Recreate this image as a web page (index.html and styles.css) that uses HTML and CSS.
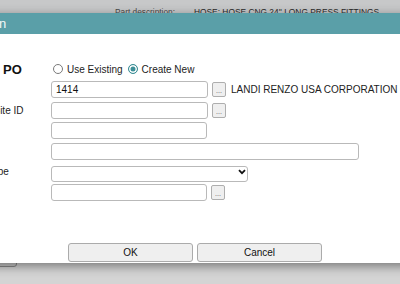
FILE: index.html
```html
<!DOCTYPE html>
<html>
<head>
<meta charset="utf-8">
<link rel="stylesheet" href="styles.css">
</head>
<body>
<div class="page">
  <div class="page-header">
    <span class="pd-label">Part description:</span>
    <span class="pd-value">HOSE: HOSE CNG 24'' LONG PRESS FITTINGS</span>
  </div>
  <div class="page-body"><span class="bg-button"></span></div>
</div>

<div class="dialog">
  <div class="dialog-title">Creation</div>
  <div class="dialog-body">
    <div class="form">
      <div class="label label-head">Create PO</div>
      <div class="field radios">
        <label class="radio-opt"><input type="radio" name="mode" class="radio"><span>Use Existing</span></label>
        <label class="radio-opt"><input type="radio" name="mode" class="radio" checked><span>Create New</span></label>
      </div>

      <div class="label">Terms</div>
      <div class="field">
        <input class="text" type="text" value="1414">
        <button class="lookup" type="button">...</button>
        <span class="vendor-name">LANDI RENZO USA CORPORATION</span>
      </div>

      <div class="label">Vendor Site ID</div>
      <div class="field">
        <input class="text" type="text">
        <button class="lookup" type="button">...</button>
      </div>

      <div class="label">Buyer</div>
      <div class="field">
        <input class="text short" type="text">
      </div>

      <div class="label">Notes</div>
      <div class="field">
        <input class="text wide" type="text">
      </div>

      <div class="label">Order Type</div>
      <div class="field">
        <div class="select">
          <select class="select-native"><option></option></select>
          <svg class="chevron" width="8" height="6" viewBox="0 0 8 6"><path d="M1 1.2 L4 4.2 L7 1.2" fill="none" stroke="#111" stroke-width="1.8"/></svg>
        </div>
      </div>

      <div class="label">Ship Via</div>
      <div class="field">
        <input class="text short" type="text">
        <button class="lookup" type="button">...</button>
      </div>
    </div>

    <div class="footer">
      <button class="btn" type="button">OK</button>
      <button class="btn" type="button">Cancel</button>
    </div>
  </div>
</div>
</body>
</html>
```

FILE: styles.css
```css
* { box-sizing: border-box; }

html, body {
  margin: 0;
  padding: 0;
}

body {
  width: 400px;
  height: 284px;
  overflow: hidden;
  position: relative;
  background: #d4d4d4;
  font-family: "Liberation Sans", Arial, sans-serif;
}

.page-header {
  height: 40px;
  background: #c7c8c9;
  display: flex;
  align-items: flex-start;
  gap: 19px;
  padding: 7px 0 0 115px;
  white-space: nowrap;
}

.pd-label {
  font-size: 8.3px;
  line-height: 10px;
  color: #4a4a4a;
}

.pd-value {
  font-size: 8.4px;
  line-height: 10px;
  color: #2a2a2a;
}

.page-body {
  padding-top: 210px;
}

.bg-button {
  display: block;
  width: 20px;
  height: 17px;
  margin-left: -3px;
  background: #cbcbcb;
  border: 1px solid #8a8a8a;
  border-radius: 3px;
}

.dialog {
  position: absolute;
  left: -60px;
  top: 13px;
  width: 510px;
  height: 250px;
  background: #fff;
  box-shadow: 0 3px 10px rgba(0, 0, 0, 0.45);
  display: flex;
  flex-direction: column;
}

.dialog-title {
  height: 21px;
  flex: none;
  background: #5a9fa8;
  color: #f4f8f8;
  font-size: 13px;
  line-height: 21px;
  padding-left: 17px;
  white-space: nowrap;
}

.dialog-body {
  flex: 1;
  display: flex;
  flex-direction: column;
  padding: 26.5px 0 1px 19px;
}

.form {
  display: grid;
  grid-template-columns: 92px auto;
  grid-template-rows: repeat(7, 17px);
  row-gap: 3.5px;
  align-items: center;
}

.label {
  font-size: 10px;
  line-height: 17px;
  color: #222;
  white-space: nowrap;
}

.label-head {
  font-size: 13px;
  font-weight: bold;
  color: #111;
}

.field {
  display: flex;
  align-items: center;
  height: 17px;
}

.radios {
  gap: 5px;
}

.radio-opt {
  display: flex;
  align-items: center;
  gap: 4px;
  font-size: 10px;
  color: #222;
  margin-left: 2px;
}

.radio-opt + .radio-opt {
  margin-left: 0;
}

.radio {
  appearance: none;
  -webkit-appearance: none;
  margin: 0;
  width: 10px;
  height: 10px;
  border: 1px solid #7a7a7a;
  border-radius: 50%;
  background: #fff;
}

.radio:checked {
  border-color: #3d8f97;
  background: #3d8f97;
  box-shadow: inset 0 0 0 1.5px #fff;
}

.text {
  width: 157px;
  height: 17px;
  margin: 0;
  border: 1px solid #b9b9b9;
  border-radius: 3px;
  padding: 0 4px;
  font-family: "Liberation Sans", Arial, sans-serif;
  font-size: 10px;
  color: #111;
  background: #fff;
  outline: none;
}

.text.short {
  width: 156px;
}

.text.wide {
  width: 308px;
}

.lookup {
  width: 14px;
  height: 15px;
  margin: 0 0 0 4px;
  padding: 0 0 2px;
  border: 1px solid #aeaeae;
  border-radius: 2px;
  background: #efefef;
  color: #555;
  font-family: "Liberation Sans", Arial, sans-serif;
  font-size: 7px;
  line-height: 1;
  display: flex;
  align-items: flex-end;
  justify-content: center;
}

.vendor-name {
  margin-left: 5px;
  font-size: 10px;
  color: #222;
  white-space: nowrap;
}

.select {
  position: relative;
  width: 197px;
  height: 16px;
}

.select-native {
  appearance: none;
  -webkit-appearance: none;
  width: 100%;
  height: 100%;
  margin: 0;
  border: 1px solid #b9b9b9;
  border-radius: 3px;
  background: #fff;
  font-size: 10px;
  outline: none;
}

.chevron {
  position: absolute;
  right: 2px;
  top: 5px;
  pointer-events: none;
}

.footer {
  margin-top: auto;
  margin-left: -19px;
  display: flex;
  justify-content: center;
  gap: 4px;
}

.btn {
  width: 125px;
  height: 19px;
  margin: 0;
  padding: 0;
  border: 1px solid #ababab;
  border-radius: 3px;
  background: #efefef;
  font-family: "Liberation Sans", Arial, sans-serif;
  font-size: 10px;
  color: #111;
}
```
